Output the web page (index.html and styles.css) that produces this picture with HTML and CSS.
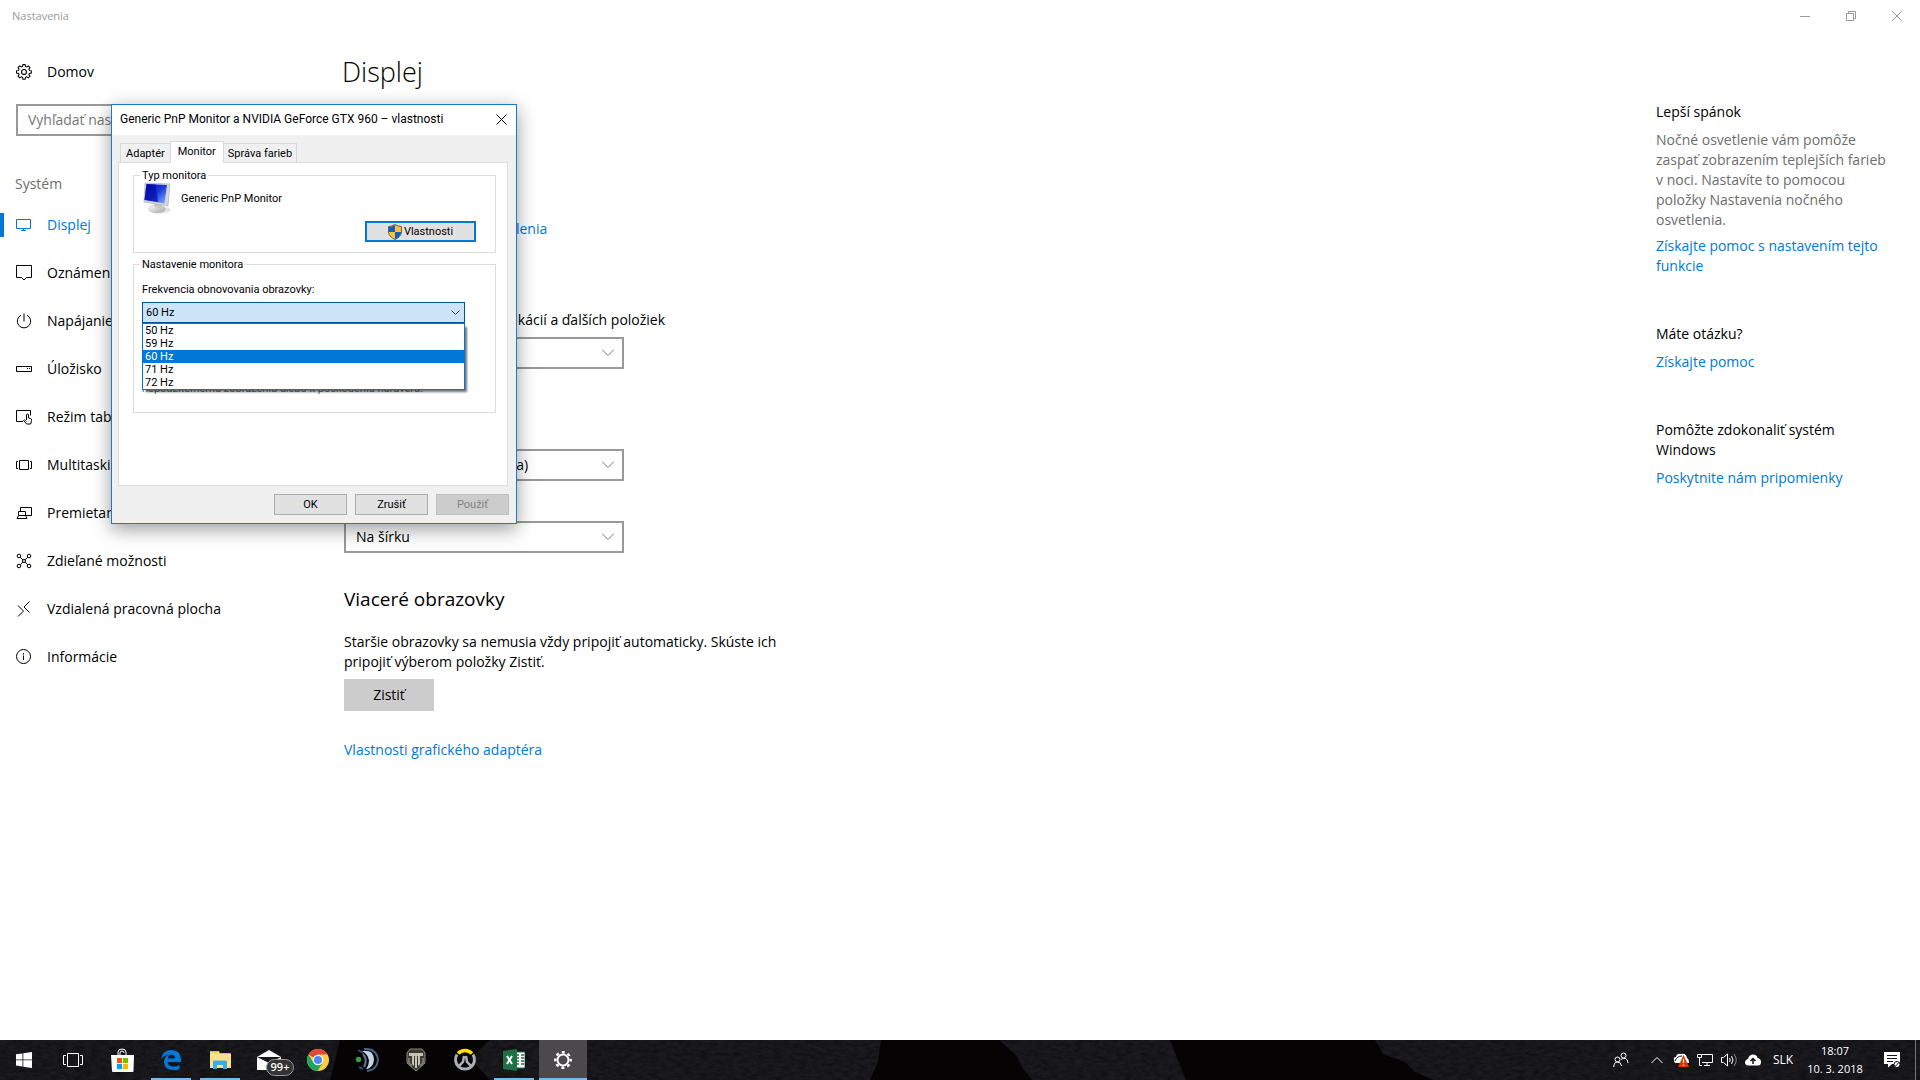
FILE: index.html
```html
<!DOCTYPE html>
<html lang="sk">
<head>
<meta charset="utf-8">
<title>Nastavenia</title>
<link rel="stylesheet" href="styles.css">
</head>
<body>
<div class="settings">
  <header class="titlebar">
    <span class="titlebar-name">Nastavenia</span>
    <div class="caption">
      <button type="button" aria-label="Minimalizovať"><svg width="10" height="10" viewBox="0 0 10 10"><path d="M0 5.500h10"/></svg></button>
      <button type="button" aria-label="Obnoviť"><svg width="10" height="10" viewBox="0 0 10 10"><path d="M.5 2.500h7v7h-7zM2.500 2.500v-2h7v7h-2"/></svg></button>
      <button type="button" aria-label="Zavrieť"><svg width="10" height="10" viewBox="0 0 10 10"><path d="M0 0l10 10M10 0L0 10"/></svg></button>
    </div>
  </header>

  <div class="columns">
    <nav class="sidebar">
      <a class="nav-item home" href="#domov"><svg class="icon" viewBox="0.500 0.300 15 15"><circle cx="8" cy="7.700" r="2.300"/><path d="M7 .8h2l.4 1.800 1.200.5 1.500-1 1.500 1.500-1 1.500.5 1.200 1.800.4v2l-1.800.4-.5 1.200 1 1.500-1.500 1.500-1.500-1-1.200.5-.4 1.800H7l-.4-1.800-1.200-.5-1.500 1-1.500-1.500 1-1.500-.5-1.200L1 8.700v-2l1.900-.4.5-1.200-1-1.500 1.500-1.500 1.500 1 1.200-.5z"/></svg>Domov</a>
      <input class="search" type="text" placeholder="Vyhľadať nastavenie" aria-label="Vyhľadať nastavenie">
      <h2 class="group">Systém</h2>
      <a class="nav-item active" href="#displej"><svg class="icon" viewBox="0 0 16 16"><path d="M.5 2.500h14v9H.5zM7.500 11.500v2M5 13.500h5"/></svg>Displej</a>
      <a class="nav-item" href="#oznamenia"><svg class="icon" viewBox="0 0 16 16"><path d="M.5.5h15v12h-5l-2.500 2.500-2.500-2.500h-5z"/></svg>Oznámenia a akcie</a>
      <a class="nav-item" href="#napajanie"><svg class="icon" viewBox="0 0 16 16"><path d="M8 .5v8M5 2.200a6.700 6.700 0 1 0 6 0"/></svg>Napájanie a režim spánku</a>
      <a class="nav-item" href="#ulozisko"><svg class="icon" viewBox="0 0 16 16"><path d="M.5 5.500h15v5H.5zM11 7.500h1M13 7.500h1"/></svg>Úložisko</a>
      <a class="nav-item" href="#tablet"><svg class="icon" viewBox="0 0 16 16"><path d="M7 12.500H.5v-11h14v5M10.500 11V6q0-1 1-1t1 1v3l2 .5q1.500.3 1 2l-.8 3.500h-4L7.500 11.500q.8-1.200 2 0l1 1"/></svg>Režim tabletu</a>
      <a class="nav-item" href="#multitasking"><svg class="icon" viewBox="0 0 16 16"><path d="M3.500 3.500h9v9h-9zM2 4.500H.5v7H2M14 4.500h1.500v7H14"/></svg>Multitasking</a>
      <a class="nav-item" href="#premietanie"><svg class="icon" viewBox="0 0 16 16"><path d="M4.500 6V2.500h11v8H10M2.500 6.500h7v4h-7zM2.500 10.500l-1.500 3h10l-1.500-3"/></svg>Premietanie na tento počítač</a>
      <a class="nav-item" href="#zdielane"><svg class="icon" viewBox="0 0 16 16"><circle cx="3" cy="3" r="1.800"/><circle cx="13" cy="3" r="1.800"/><circle cx="3" cy="13" r="1.800"/><circle cx="13" cy="13" r="1.800"/><circle cx="8" cy="8" r="1.500"/><path d="M4.300 4.300l2.600 2.600M9.100 9.100l2.600 2.600M11.700 4.300L9.100 6.900M6.900 9.100l-2.600 2.600"/></svg>Zdieľané možnosti</a>
      <a class="nav-item" href="#plocha"><svg class="icon" viewBox="0 0 16 16"><path d="M2 4.500L7.500 10 2 15.500M13.500.5L8 6l5.500 5.500"/></svg>Vzdialená pracovná plocha</a>
      <a class="nav-item" href="#informacie"><svg class="icon" viewBox="0 0 16 16"><circle cx="7.500" cy="7.500" r="7"/><path d="M7.500 6.500V11M7.500 4v1.500"/></svg>Informácie</a>
    </nav>

    <main class="page">
      <h1>Displej</h1>
      <a class="night" href="#nocne">Nastavenia nočného osvetlenia</a>
      <label for="scale">Zmeniť veľkosti textov, aplikácií a ďalších položiek</label>
      <div class="drop"><select id="scale"><option>100 %</option></select><svg viewBox="0 0 12 7"><path d="M0 .5l6 6 6-6"/></svg></div>
      <div class="drop resolution"><select aria-label="Rozlíšenie"><option>1920 × 1080 (odporúča sa)</option></select><svg viewBox="0 0 12 7"><path d="M0 .5l6 6 6-6"/></svg></div>
      <div class="drop orientation"><select aria-label="Orientácia"><option>Na šírku</option></select><svg viewBox="0 0 12 7"><path d="M0 .5l6 6 6-6"/></svg></div>
      <h2>Viaceré obrazovky</h2>
      <p>Staršie obrazovky sa nemusia vždy pripojiť automaticky. Skúste ich pripojiť výberom položky Zistiť.</p>
      <button class="detect" type="button">Zistiť</button>
      <a class="adapter" href="#adapter">Vlastnosti grafického adaptéra</a>
    </main>

    <aside class="help">
      <section>
        <h3>Lepší spánok</h3>
        <p>Nočné osvetlenie vám pomôže zaspať zobrazením teplejších farieb v noci. Nastavíte to pomocou položky Nastavenia nočného osvetlenia.</p>
        <a class="close-link" href="#pomoc-spanok">Získajte pomoc s nastavením tejto funkcie</a>
      </section>
      <section>
        <h3>Máte otázku?</h3>
        <a href="#pomoc">Získajte pomoc</a>
      </section>
      <section>
        <h3>Pomôžte zdokonaliť systém Windows</h3>
        <a href="#pripomienky">Poskytnite nám pripomienky</a>
      </section>
    </aside>
  </div>
</div>

<div class="dialog" role="dialog" aria-labelledby="dialog-title">
  <header class="dialog-bar">
    <span id="dialog-title">Generic PnP Monitor a NVIDIA GeForce GTX 960 – vlastnosti</span>
    <button type="button" aria-label="Zavrieť"><svg width="11" height="11" viewBox="0 0 11 11"><path d="M.5.5l10 10M10.500.5l-10 10"/></svg></button>
  </header>
  <div class="dialog-body">
    <div class="tabs" role="tablist">
      <button type="button" role="tab">Adaptér</button>
      <button type="button" role="tab" class="current" aria-selected="true">Monitor</button>
      <button type="button" role="tab">Správa farieb</button>
    </div>
    <div class="panel" role="tabpanel">
      <fieldset class="kind">
        <legend>Typ monitora</legend>
        <div class="device">
          <svg width="32" height="32" viewBox="0 0 32 32">
            <defs>
              <linearGradient id="scr" x1="0" y1="0" x2="1" y2="1"><stop offset="0" stop-color="#0a10a8"/><stop offset=".5" stop-color="#1c38dc"/><stop offset="1" stop-color="#8cb4fa"/></linearGradient>
              <linearGradient id="base" x1="0" y1="0" x2="1" y2="1"><stop offset="0" stop-color="#fff"/><stop offset="1" stop-color="#a4a4a4"/></linearGradient>
            </defs>
            <ellipse cx="18" cy="28" rx="11" ry="3.500" fill="#e6e6e6"/>
            <ellipse cx="15" cy="27" rx="8.500" ry="4" fill="url(#base)" stroke="#bbb" stroke-width=".5"/>
            <path d="M12 21l8 1v4l-7-1z" fill="#c6c6c6"/>
            <path d="M3 1l25 1-2 22-24-4z" fill="#d4d7dc" stroke="#a8a8a8" stroke-width=".6"/>
            <path d="M4.500 2l20.500 1-2.500 18.500-20-3.500z" fill="url(#scr)"/>
            <path d="M4.500 2l9 .5 2.500 17.500-13.500-2.200z" fill="#0508a0" opacity=".65"/>
          </svg>
          <span>Generic PnP Monitor</span>
        </div>
        <button class="win-button primary" type="button"><svg width="14" height="16" viewBox="0 0 14 16"><path d="M7 .5Q10 2.500 13.500 2.500V8Q13 13 7 15.500 1 13 .5 8V2.500Q4 2.500 7 .5z" fill="#ffc233"/><path d="M7 1Q4 2.800.8 3v5H7zM7 8v7.200Q12.500 13 13.200 8z" fill="#0b62c4"/><path d="M7 .5Q10 2.500 13.500 2.500V8Q13 13 7 15.500 1 13 .5 8V2.500Q4 2.500 7 .5z" fill="none" stroke="#555" stroke-width=".9"/></svg>Vlastnosti</button>
      </fieldset>
      <fieldset class="setup">
        <legend>Nastavenie monitora</legend>
        <label for="rate">Frekvencia obnovovania obrazovky:</label>
        <div class="combo">
          <select id="rate"><option>60 Hz</option></select>
          <svg class="combo-arrow" viewBox="0 0 9 5"><path d="M.5.5l4 4 4-4"/></svg>
          <ul class="rates" role="listbox" aria-label="Frekvencia">
            <li role="option">50 Hz</li>
            <li role="option">59 Hz</li>
            <li role="option" class="picked" aria-selected="true">60 Hz</li>
            <li role="option">71 Hz</li>
            <li role="option">72 Hz</li>
          </ul>
        </div>
        <p class="warning">nepoužiteľnému zobrazeniu alebo k poškodeniu hardvéru.</p>
      </fieldset>
    </div>
    <footer class="dialog-actions">
      <button class="win-button" type="button">OK</button>
      <button class="win-button" type="button">Zrušiť</button>
      <button class="win-button" type="button" disabled>Použiť</button>
    </footer>
  </div>
</div>

<footer class="taskbar">
  <svg class="rock" viewBox="0 0 1920 40" preserveAspectRatio="none">
    <filter id="grain" x="0" y="0" width="100%" height="100%"><feTurbulence type="fractalNoise" baseFrequency=".12 .3" numOctaves="3" seed="4"/><feColorMatrix values="0 0 0 0 0  0 0 0 0 0  0 0 0 0 0  0 0 0 1.600 -.55"/></filter>
    <path d="M0 0h1920v40H0z" fill="#1b1a1f"/>
    <path d="M0 0h1920v40H0z" filter="url(#grain)" opacity=".5"/>
    <path d="M340 0h150l-20 18 20 22H330zM881 0h118l17 15 6 12 10 13H870l8-18zM1170 0h205l8 14 22 8 10 10 18 8H1186z" fill="#050304"/>
  </svg>
  <div class="apps">
    <button type="button" aria-label="Štart"><svg width="16" height="16" viewBox="0 0 16 16" fill="#fff"><path d="M0 2.300l6.500-.9v6.100H0zM7.300 1.300L16 0v7.500H7.300zM0 8.300h6.500v6.100L0 13.500zM7.300 8.300H16V16l-8.700-1.300z"/></svg></button>
    <button type="button" aria-label="Zobrazenie úloh"><svg width="20" height="16" viewBox="0 0 20 16" fill="none" stroke="#fff"><path d="M4.500 1.500h11v13h-11zM3 3.500H.5v9H3M17 3.500h2.500v9H17"/></svg></button>
    <button type="button" aria-label="Store"><svg width="24" height="24" viewBox="0 0 24 24"><path d="M8 7V4q0-3 4-3t4 3v3M10 7V5q0-2 2-2t2 2" fill="none" stroke="#fff"/><path d="M1 7h23l-.5 16q0 1-1 1H3q-1 0-1-1z" fill="#fff"/><path d="M7 10h5v5H7z" fill="#f25022"/><path d="M13 10h5v5h-5z" fill="#7fba00"/><path d="M7 16h5v5H7z" fill="#00a4ef"/><path d="M13 16h5v5h-5z" fill="#ffb900"/></svg></button>
    <button type="button" class="running" aria-label="Edge"><svg width="20" height="20" viewBox="0 0 20 20"><path d="M0 9Q1.500 0 10.500 0 19.500.5 20 9v3H6.500q.5 4.500 6 4.600 3.500 0 6-1.600v4Q15.500 20.500 11.500 20 3.500 19.500 3 12.500q0-6 5-8Q3 5 0 9zM6.700 8.500h7.400q0-3.700-3.500-3.800-3.500.2-3.900 3.800z" fill="#0078d7"/></svg></button>
    <button type="button" class="running" aria-label="Prieskumník"><svg width="22" height="20" viewBox="0 0 22 20"><path d="M1 1h9l1 2h10q1 0 1 1v14H1z" fill="#e8b93c"/><path d="M1 4h21v14H1z" fill="#ffe08c"/><path d="M1 3h9" stroke="#fff6c8"/><path d="M4 19v-7q0-1.500 1.500-1.500h11q1.500 0 1.500 1.500v7h-4v-4H8v4z" fill="#3aaee0"/></svg></button>
    <button type="button" class="mail" aria-label="Pošta"><svg width="24" height="20" viewBox="0 0 24 20"><path d="M0 7L12 0l12 7v13H0z" fill="#fff"/><path d="M0 7h24l-12 6z" fill="#17151a"/></svg><span class="badge">99+</span></button>
    <button type="button" aria-label="Chrome"><svg width="22" height="22" viewBox="0 0 22 22"><circle cx="11" cy="11" r="11" fill="#ffcd40"/><path d="M11 11L1.500 5.500A11 11 0 0 1 20.600 5.600H11z" fill="#de4b3e"/><path d="M1.500 5.500A11 11 0 0 0 10.500 22l5.200-8.300L11 16l-5-3z" fill="#1ea362"/><circle cx="11" cy="11" r="5.200" fill="#fff"/><circle cx="11" cy="11" r="4.100" fill="#4c8bf5"/></svg></button>
    <button type="button" aria-label="TeamSpeak"><svg width="24" height="24" viewBox="0 0 24 24"><path d="M9 1q13-1 14 11Q22 22 12 23" fill="none" stroke="#47627e" stroke-width="2"/><path d="M7 3q12-2 12 9-1 8-8 9.500 3-4 3-9Q13 6 7 3z" fill="#c3d3e2"/><path d="M3 2l5 3M4 19l4 2" fill="none" stroke="#304c68" stroke-width="2"/><path d="M8 6q5 6 1 13" fill="none" stroke="#5c7590" stroke-width="2"/><circle cx="3.500" cy="11.500" r="2.700" fill="#2e9e45"/></svg></button>
    <button type="button" aria-label="World of Tanks"><svg width="20" height="24" viewBox="0 0 20 24"><path d="M4 1h12l3 4v10l-9 8-9-8V5z" fill="#3c3a34" stroke="#8d8a7b"/><path d="M3 5h14v3h-3v8l-2 2V8h-1v12H9V8H8v10l-2-2V8H3z" fill="#c8c4b2"/><path d="M3 10v5l3 3M17 10v5l-3 3" fill="none" stroke="#8d8a7b" stroke-width="1.500"/></svg></button>
    <button type="button" aria-label="Overwatch"><svg width="24" height="24" viewBox="0 0 24 24" fill="none"><path d="M4 6.500a9.500 9.500 0 1 0 16 0" stroke="#a9b0b7" stroke-width="3"/><path d="M5 5.500a9.500 9.500 0 0 1 14 0" stroke="#ffe100" stroke-width="3.500"/><path d="M11 8l-1 6-5 5M13 8l1 6 5 5" stroke="#a9b0b7" stroke-width="2.500"/></svg></button>
    <button type="button" class="running" aria-label="Excel"><svg width="22" height="22" viewBox="0 0 22 22"><path d="M11 3h11v16H11z" fill="#fff" stroke="#1e7145"/><path d="M13 6h3M13 9h3M13 12h3M13 15h3M18 6h3M18 9h3M18 12h3M18 15h3" stroke="#1e7145" stroke-width="1.500"/><path d="M0 2l14-2v22L0 20z" fill="#1e7145"/><path d="M4 7l5 8M9 7l-5 8" stroke="#fff" stroke-width="2"/></svg></button>
    <button type="button" class="running focused" aria-label="Nastavenia"><svg width="18" height="18" viewBox="0 0 18 18" fill="none" stroke="#fff"><circle cx="9" cy="9" r="5.500" stroke-width="2"/><circle cx="9" cy="9" r="7.700" stroke-width="2.400" stroke-dasharray="3 3.047" stroke-dashoffset="1.500"/></svg></button>
  </div>
  <div class="tray">
    <button type="button" class="people" aria-label="Ľudia"><svg width="16" height="16" viewBox="0 0 16 16" fill="none" stroke="#fff"><circle cx="10.500" cy="3.500" r="2.500"/><circle cx="4.500" cy="7.500" r="2.500"/><path d="M.8 15q0-5 3.700-5t4 4M8 7.500q2.300-2 4.500-1 2.500 1 2.500 4.500"/></svg></button>
    <button type="button" aria-label="Skryté ikony"><svg width="12" height="8" viewBox="0 0 12 8" fill="none" stroke="#fff"><path d="M.5 7L6 1.500 11.500 7"/></svg></button>
    <button type="button" aria-label="OneDrive"><svg width="16" height="16" viewBox="0 0 16 16"><path d="M1 8q-1-3 2-3Q4 1 8 2q5-1 6 4 2 1 2 5H3q-2 0-2-3z" fill="#fff"/><path d="M2 9q2-5 7-5" fill="none" stroke="#16141a"/><path d="M10.500 3L16 15H5z" fill="#d83b01"/><path d="M10.500 7v4M10.500 12.500v1.200" stroke="#fff" stroke-width="1.200"/></svg></button>
    <button type="button" aria-label="Sieť"><svg width="16" height="14" viewBox="0 0 16 14" fill="none" stroke="#fff"><path d="M5 1.500h10.500v8H5M10 9.500v3M7 12.500h6M.5 1.500h4v3h-4zM2.500 4.500v8H5"/></svg></button>
    <button type="button" aria-label="Hlasitosť"><svg width="16" height="14" viewBox="0 0 16 14" fill="none" stroke="#fff"><path d="M.5 4.500h2l4-3.500v12l-4-3.500h-2zM8.500 5q1.500 2 0 4M10.500 3q3 4 0 8"/><path d="M13 1q4.500 6 0 12" stroke="#888"/></svg></button>
    <button type="button" aria-label="Cloud"><svg width="16" height="12" viewBox="0 0 16 12"><path d="M3 11.500Q0 11 0 8.500T3 5Q4 .5 8 .5T12.500 4Q16 4.500 16 8t-3 3.500z" fill="#fff"/><path d="M8 10V4.500M5.500 7L8 4.500 10.500 7" fill="none" stroke="#16141a" stroke-width="1.500"/></svg></button>
    <button type="button" class="lang">SLK</button>
    <button type="button" class="clock"><span>18:07</span><span>10. 3. 2018</span></button>
    <button type="button" class="action" aria-label="Centrum akcií"><svg width="17" height="17" viewBox="0 0 17 17"><path d="M0 0h16v12H8l-4 3.500V12H0z" fill="#fff"/><path d="M3 3.500h10M3 6.500h10M3 9.500h6" stroke="#16141a"/><circle cx="13" cy="12.500" r="3" fill="#fff" stroke="#16141a"/><path d="M11 14.500l4-4" stroke="#16141a"/></svg></button>
    <button type="button" class="peek" aria-label="Zobraziť pracovnú plochu"></button>
  </div>
</footer>
</body>
</html>
```
FILE: styles.css
```css
* { box-sizing: border-box; }

body {
  margin: 0;
  min-height: 100vh;
  display: flex;
  flex-direction: column;
  background: #fff;
  color: #000;
  font: 14px/20px "Open Sans", "Noto Sans", sans-serif;
}

button, input, select { font: inherit; color: inherit; margin: 0; border-radius: 0; }
h1, h2, h3, p, ul { margin: 0; padding: 0; font-weight: 400; }
h3 { font-size: 14px; }
a { color: #0078d7; text-decoration: none; }
svg { display: block; flex: none; }

/* Settings window */
.settings { flex: 1; }

.titlebar {
  display: flex;
  justify-content: space-between;
  align-items: center;
  padding-left: 12px;
  height: 32px;
  color: #999;
  font-size: 11px;
}
.caption { display: flex; }
.caption button {
  width: 46px;
  height: 32px;
  padding: 0;
  border: 0;
  background: none;
  display: grid;
  place-items: center;
}
.caption svg { fill: none; stroke: #999; }

.columns { display: flex; padding-top: 16px; }

.sidebar { width: 320px; flex: none; display: flex; flex-direction: column; }
.nav-item {
  display: flex;
  align-items: center;
  gap: 15px;
  height: 48px;
  padding-left: 16px;
  color: #000;
}
.icon { width: 16px; height: 16px; fill: none; stroke: currentColor; }
.active {
  color: #0078d7;
  background: linear-gradient(#0078d7, #0078d7) 0 center / 4px 24px no-repeat;
}
.search {
  height: 32px;
  margin: 8px 16px 0;
  padding: 0 10px 1px;
  border: 2px solid #999;
  background: #fff;
}
.search::placeholder { color: #767676; opacity: 1; }
.group { padding: 38px 0 7px 15px; font-size: 14px; color: #6d6d6d; }

.page { flex: 1; min-width: 0; padding-left: 24px; display: flex; flex-direction: column; align-items: flex-start; }
.page h1 { font-size: 27px; line-height: 40px; margin: 4px 0 0 -2px; font-weight: 300; }
.page h2 { font-size: 19px; line-height: 28px; margin-top: 32px; }
.page p { max-width: 450px; margin-top: 19px; }
.night { margin-top: 127px; }
.page label { margin-top: 71px; }
.drop { position: relative; width: 280px; margin-top: 7px; }
.drop select {
  display: block;
  width: 100%;
  height: 32px;
  padding: 0 36px 0 10px;
  border: 2px solid #999;
  background: #fff;
  appearance: none;
}
.drop svg { position: absolute; right: 10px; top: 12px; width: 12px; height: 7px; fill: none; stroke: #777; }
.resolution { margin-top: 80px; }
.orientation { margin-top: 40px; }
.detect { width: 90px; height: 32px; margin-top: 7px; padding: 0; border: 0; background: #ccc; }
.adapter { margin-top: 29px; }

.help { width: 264px; flex: none; padding: 54px 24px 0 0; display: flex; flex-direction: column; gap: 48px; }
.help section { display: flex; flex-direction: column; gap: 8px; }
.help p { color: #6d6d6d; }
.help .close-link { margin-top: -2px; }

/* Monitor properties dialog */
.dialog {
  position: absolute;
  left: 111px;
  top: 104px;
  width: 406px;
  border: 1px solid #1979ca;
  background: #f0f0f0;
  box-shadow: 0 5px 18px rgba(0, 0, 0, .4);
  font-family: Roboto, "Open Sans", sans-serif;
  font-size: 11px;
  line-height: 13px;
}
.dialog-bar { display: flex; align-items: center; justify-content: space-between; height: 30px; padding: 0 0 1px 8px; background: #fff; font-size: 12px; }
.dialog-bar button { width: 30px; height: 29px; padding: 0; border: 0; background: none; display: grid; place-items: center; }
.dialog-bar svg { fill: none; stroke: #000; }
.dialog-body { padding: 6px 7px 8px 6px; }

.tabs { display: flex; align-items: flex-end; padding-left: 2px; height: 21px; }
.tabs button { height: 19px; padding: 0 5px; border: 1px solid #d9d9d9; border-bottom: 0; background: #f0f0f0; }
.tabs button:last-child { border-left: 0; padding: 0 4px; }
.tabs button:first-child { border-right: 0; }
.tabs .current { height: 22px; padding: 0 7px 3px; margin-bottom: -1px; background: #fff; position: relative; }

.panel { height: 324px; margin-right: 1px; padding: 6px 11px 0 14px; border: 1px solid #dcdcdc; background: #fff; }
.panel fieldset { margin: 0; min-width: 0; padding: 0 19px 0 8px; border: 1px solid #dcdcdc; }
.panel legend { padding: 0 2px; margin-left: -2px; }
.kind { height: 84px; display: block; }
.panel .setup { height: 155px; margin-top: 5px; }
.device { display: flex; align-items: center; gap: 7px; }
.win-button { width: 73px; height: 21px; padding: 0; border: 1px solid #adadad; background: #e1e1e1; }
.win-button:disabled { border-color: #bfbfbf; background: #ccc; color: #838383; }
.primary {
  display: flex;
  align-items: center;
  justify-content: center;
  gap: 2px;
  width: 111px;
  margin: 7px 0 0 auto;
  border: 2px solid #0078d7;
}
.setup label { display: block; margin-top: 12px; }
.combo { position: relative; width: 323px; margin-top: 6px; }
.combo select { display: block; width: 100%; height: 21px; padding: 0 3px; border: 1px solid #005499; background: #cce4f7; appearance: none; }
.combo-arrow { position: absolute; right: 5px; top: 8px; width: 9px; height: 5px; fill: none; stroke: #444; }
.rates {
  position: absolute;
  left: 0;
  top: 21px;
  width: 100%;
  list-style: none;
  border: 1px solid #0078d7;
  background: #fff;
  box-shadow: 3px 3px 2px -1px rgba(0, 0, 0, .55);
}
.rates li { padding-left: 2px; }
.rates .picked { background: #0078d7; color: #fff; }
.warning { padding-top: 59px; color: #6d6d6d; }

.dialog-actions { display: flex; justify-content: flex-end; gap: 8px; margin-top: 8px; }

/* Taskbar */
.taskbar { position: relative; display: flex; justify-content: space-between; height: 40px; overflow: hidden; background: #141318; color: #fff; }
.taskbar button { padding: 0; border: 0; background: none; display: grid; place-items: center; }
.rock { position: absolute; inset: 0; width: 100%; height: 100%; }
.apps, .tray { position: relative; display: flex; }
.apps { gap: 1px; }
.apps button { width: 48px; height: 40px; }
.apps .running { background: linear-gradient(#76b9ed, #76b9ed) center bottom / 40px 2px no-repeat; }
.apps .focused { background: linear-gradient(#76b9ed, #76b9ed) center bottom / 48px 2px no-repeat, #4b494d; }
.apps .mail { position: relative; }
.badge {
  position: absolute;
  left: 21px;
  top: 19px;
  width: 28px;
  height: 17px;
  border: 1px solid #999;
  border-radius: 9px;
  background: #333;
  font-size: 11px;
  font-weight: 600;
  line-height: 14px;
}
.tray button { width: 24px; height: 40px; }
.tray .people { width: 48px; }
.tray .lang { width: 36px; font-size: 12px; }
.tray .clock { width: 68px; font-size: 11px; line-height: 18px; align-content: center; }
.tray .action { width: 46px; }
.tray .peek { width: 5px; border-left: 1px solid #777; }
```
